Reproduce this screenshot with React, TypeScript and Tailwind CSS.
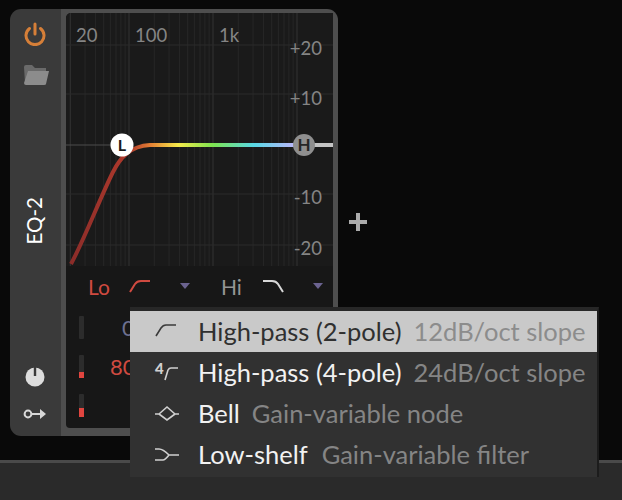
import React from "react";

// log-spaced frequency grid, 84px per decade with 100Hz at x=129
const freqLines = [30, 40, 50, 60, 70, 80, 90, 200, 300, 400, 500, 600, 700, 800, 900, 2000, 3000, 4000, 5000, 6000, 7000, 8000, 9000];
const decadeLines = [20, 100, 1000, 10000];
const freqX = (f: number) => 129 + 84 * Math.log10(f / 100);

const gainLabels = [
  { label: "+20", y: 55 },
  { label: "+10", y: 105 },
  { label: "-10", y: 204 },
  { label: "-20", y: 255 },
];

const EqGraph: React.FC = () => (
  <svg viewBox="66 13 267 253" className="w-[267px] h-[253px] block shrink-0 bg-[#1a1a1a]">
    <defs>
      <linearGradient id="curve" gradientUnits="userSpaceOnUse" x1="70" y1="0" x2="300" y2="0">
        <stop offset="0" stopColor="#8a2c29" />
        <stop offset="0.26" stopColor="#b03a2c" />
        <stop offset="0.35" stopColor="#e58034" />
        <stop offset="0.47" stopColor="#f6ea4a" />
        <stop offset="0.62" stopColor="#7ee450" />
        <stop offset="0.8" stopColor="#58d8e6" />
        <stop offset="0.97" stopColor="#b8b8fa" />
      </linearGradient>
    </defs>

    {freqLines.map((f) => (
      <line key={f} x1={freqX(f)} x2={freqX(f)} y1="13" y2="266" stroke="#272727" />
    ))}
    {decadeLines.map((f) => (
      <line key={f} x1={freqX(f)} x2={freqX(f)} y1="13" y2="266" stroke="#333333" />
    ))}
    {[45, 94, 194, 245].map((y) => (
      <line key={y} x1="66" x2="333" y1={y} y2={y} stroke="#2a2a2a" />
    ))}
    <line x1="66" x2="120" y1="145" y2="145" stroke="#4c4c4c" />

    <g className="fill-[#858585] text-[18.5px]">
      <text x="76" y="42">20</text>
      <text x="135" y="42">100</text>
      <text x="219" y="42">1k</text>
      {gainLabels.map((g) => (
        <text key={g.label} x="322" y={g.y} textAnchor="end">{g.label}</text>
      ))}
    </g>

    <line x1="304" x2="333" y1="145" y2="145" stroke="#c4c4c4" strokeWidth="4" />
    <path
      d="M71 264 C 85 238 100 198 113 172 C 120 158 130 146 150 145 L 296 145"
      fill="none"
      stroke="url(#curve)"
      strokeWidth="4"
    />

    <circle cx="122" cy="145" r="11.5" fill="#ffffff" />
    <text x="122" y="151" textAnchor="middle" className="fill-[#1a1a1a] text-[16px] font-bold">L</text>
    <circle cx="304" cy="145" r="11" fill="#8f8f8f" />
    <text x="304" y="151" textAnchor="middle" className="fill-[#262626] text-[17px] font-bold">H</text>
  </svg>
);

const Sidebar: React.FC = () => (
  <div className="w-[51px] shrink-0 bg-[#3a3a3a] flex flex-col items-center">
    <svg width="24" height="24" viewBox="0 0 24 24" fill="none" stroke="#d67f38" strokeWidth="3" strokeLinecap="round" className="mt-[13px] -ml-[2px]">
      <path d="M6.5 6.5 A 9 9 0 1 0 17.5 6.5" />
      <path d="M12 2 V 12" />
    </svg>
    <svg width="26" height="20" viewBox="0 0 26 20" className="mt-[19px] ml-[3px]">
      <path d="M0 2 Q0 0 2 0 H8 L11 3 H22 V18 H1 Z" fill="#6a6a6a" />
      <path d="M4 6 H25 L22 19 Q22 20 20 20 H2 Q0 20 0 18 Z" fill="#8c8c8c" />
    </svg>
    <div className="mt-[106px] h-[60px] flex items-center justify-center -ml-[2px]">
      <span className="text-white text-[20.5px] [writing-mode:vertical-rl] rotate-180 leading-none">EQ-2</span>
    </div>
    <svg width="20" height="20" viewBox="0 0 20 20" className="mt-[116px] -ml-[2px]">
      <circle cx="10" cy="10" r="9.5" fill="#dddddd" />
      <rect x="8.8" y="0" width="2.4" height="9" fill="#3a3a3a" />
    </svg>
    <svg width="24" height="12" viewBox="0 0 24 12" fill="none" className="mt-[21px] -ml-[2px]">
      <circle cx="5" cy="6" r="3.4" stroke="#d8d8d8" strokeWidth="2" />
      <path d="M8 6 H18" stroke="#d8d8d8" strokeWidth="2" />
      <path d="M17 1 L23 6 L17 11 Z" fill="#d8d8d8" />
    </svg>
  </div>
);

const Meter: React.FC<{ fill: number }> = ({ fill }) => (
  <div className="w-[5px] h-[23px] bg-[#2c2c2c] rounded-[1px] flex flex-col justify-end shrink-0">
    {fill > 0 && <div className="bg-[#e0453f]" style={{ height: fill }} />}
  </div>
);

const FilterControls: React.FC = () => (
  <div className="h-[40px] flex items-center shrink-0">
    <span className="ml-[22px] text-[21px] text-[#cf4a40] leading-none">Lo</span>
    <svg width="22" height="14" viewBox="0 0 22 14" fill="none" stroke="#cf4a40" strokeWidth="2" className="ml-[19px]">
      <path d="M1 13 L6 5 Q8 2 12 2 H21" />
    </svg>
    <svg width="10" height="6" viewBox="0 0 10 6" className="ml-[29px]">
      <path d="M0 0 H10 L5 6 Z" fill="#6b6390" />
    </svg>
    <span className="ml-[31px] text-[21px] text-[#959595] leading-none">Hi</span>
    <svg width="22" height="14" viewBox="0 0 22 14" fill="none" stroke="#d8d8d8" strokeWidth="2" className="ml-[20px]">
      <path d="M1 2 H10 Q14 2 16 5 L21 13" />
    </svg>
    <svg width="10" height="6" viewBox="0 0 10 6" className="ml-[29px]">
      <path d="M0 0 H10 L5 6 Z" fill="#6b6390" />
    </svg>
  </div>
);

const menuItems = [
  {
    name: "High-pass (2-pole)",
    hint: "12dB/oct slope",
    icon: <path d="M1 14 L6 6 Q8 3 11 3 H21" />,
  },
  {
    name: "High-pass (4-pole)",
    hint: "24dB/oct slope",
    icon: (
      <>
        <path d="M10 17 L13 7 Q14 5 16 5 H23" />
        <text x="0" y="11" fontSize="15" fontWeight="900" stroke="none" fill="currentColor">4</text>
      </>
    ),
  },
  {
    name: "Bell",
    hint: "Gain-variable node",
    icon: <path d="M0 10 H4 L12 3 L20 10 H24 M4 10 L12 16 L20 10" />,
  },
  {
    name: "Low-shelf",
    hint: "Gain-variable filter",
    icon: <path d="M0 4 H4 Q8 4 14 10 H24 M0 15 H8 Q10 15 14 10" />,
  },
];

const FilterMenu: React.FC = () => (
  <div className="absolute left-[130px] top-[307px] w-[469px] bg-[#313131] border-t-4 border-r-2 border-t-[#272727] border-r-[#1c1c1c] pb-[2px] text-[25.5px] leading-none">
    {menuItems.map((item, i) => (
      <div key={item.name} className={`h-[41px] flex items-center ${i === 0 ? "bg-[#c9c9c9] text-[#303030]" : "text-[#f2f2f2]"}`}>
        <svg
          width="24"
          height="20"
          viewBox="0 0 24 20"
          fill="none"
          stroke="currentColor"
          strokeWidth="1.6"
          className={`ml-[25px] mr-[19px] shrink-0 overflow-visible ${i === 0 ? "text-[#3a3a3a]" : "text-[#d0d0d0]"}`}
        >
          {item.icon}
        </svg>
        <span>{item.name}</span>
        <span className={`${i === 3 ? "ml-[14px]" : "ml-[12px]"} ${i === 0 ? "text-[#8c8c8c]" : "text-[#858585]"}`}>{item.hint}</span>
      </div>
    ))}
  </div>
);

export default function App() {
  return (
    <div className="relative w-[622px] h-[500px] overflow-hidden bg-[#090909] flex flex-col font-['Lato',sans-serif]">
      <div className="flex items-start pt-[9px] pl-[10px] h-[460px] shrink-0">
        <div className="w-[328px] h-[427px] flex rounded-tl-[11px] rounded-bl-[11px] rounded-tr-[11px] overflow-hidden">
          <Sidebar />
          <div className="flex-1 bg-[#4e4e4e] pt-[4px] pl-[5px] pr-[5px] pb-[8px] flex">
            <div className="w-[267px] bg-[#171717] rounded-tl-[5px] rounded-bl-[4px] overflow-hidden flex flex-col">
              <EqGraph />
              <FilterControls />
              <div className="pt-[10px] flex flex-col gap-[16px]">
                <div className="h-[23px] flex items-center pl-[13px]">
                  <Meter fill={0} />
                  <span className="ml-[38px] text-[22px] text-[#6d7090] leading-none">0</span>
                </div>
                <div className="h-[23px] flex items-center pl-[13px]">
                  <Meter fill={6} />
                  <span className="ml-[26px] text-[22px] text-[#cf4a40] leading-none">80</span>
                </div>
                <div className="h-[23px] flex items-center pl-[13px]">
                  <Meter fill={9} />
                </div>
              </div>
            </div>
          </div>
        </div>
        <span className="mt-[204px] ml-[11px] w-[18px] h-[18px] relative shrink-0">
          <span className="block absolute left-0 top-[7px] w-[18px] h-[4px] bg-[#ababab]" />
          <span className="block absolute left-[7px] top-0 w-[4px] h-[18px] bg-[#ababab]" />
        </span>
      </div>
      <div className="flex-1 bg-[#2a2a2a] border-t-[3px] border-t-[#4a4a4a]" />
      <FilterMenu />
    </div>
  );
}
